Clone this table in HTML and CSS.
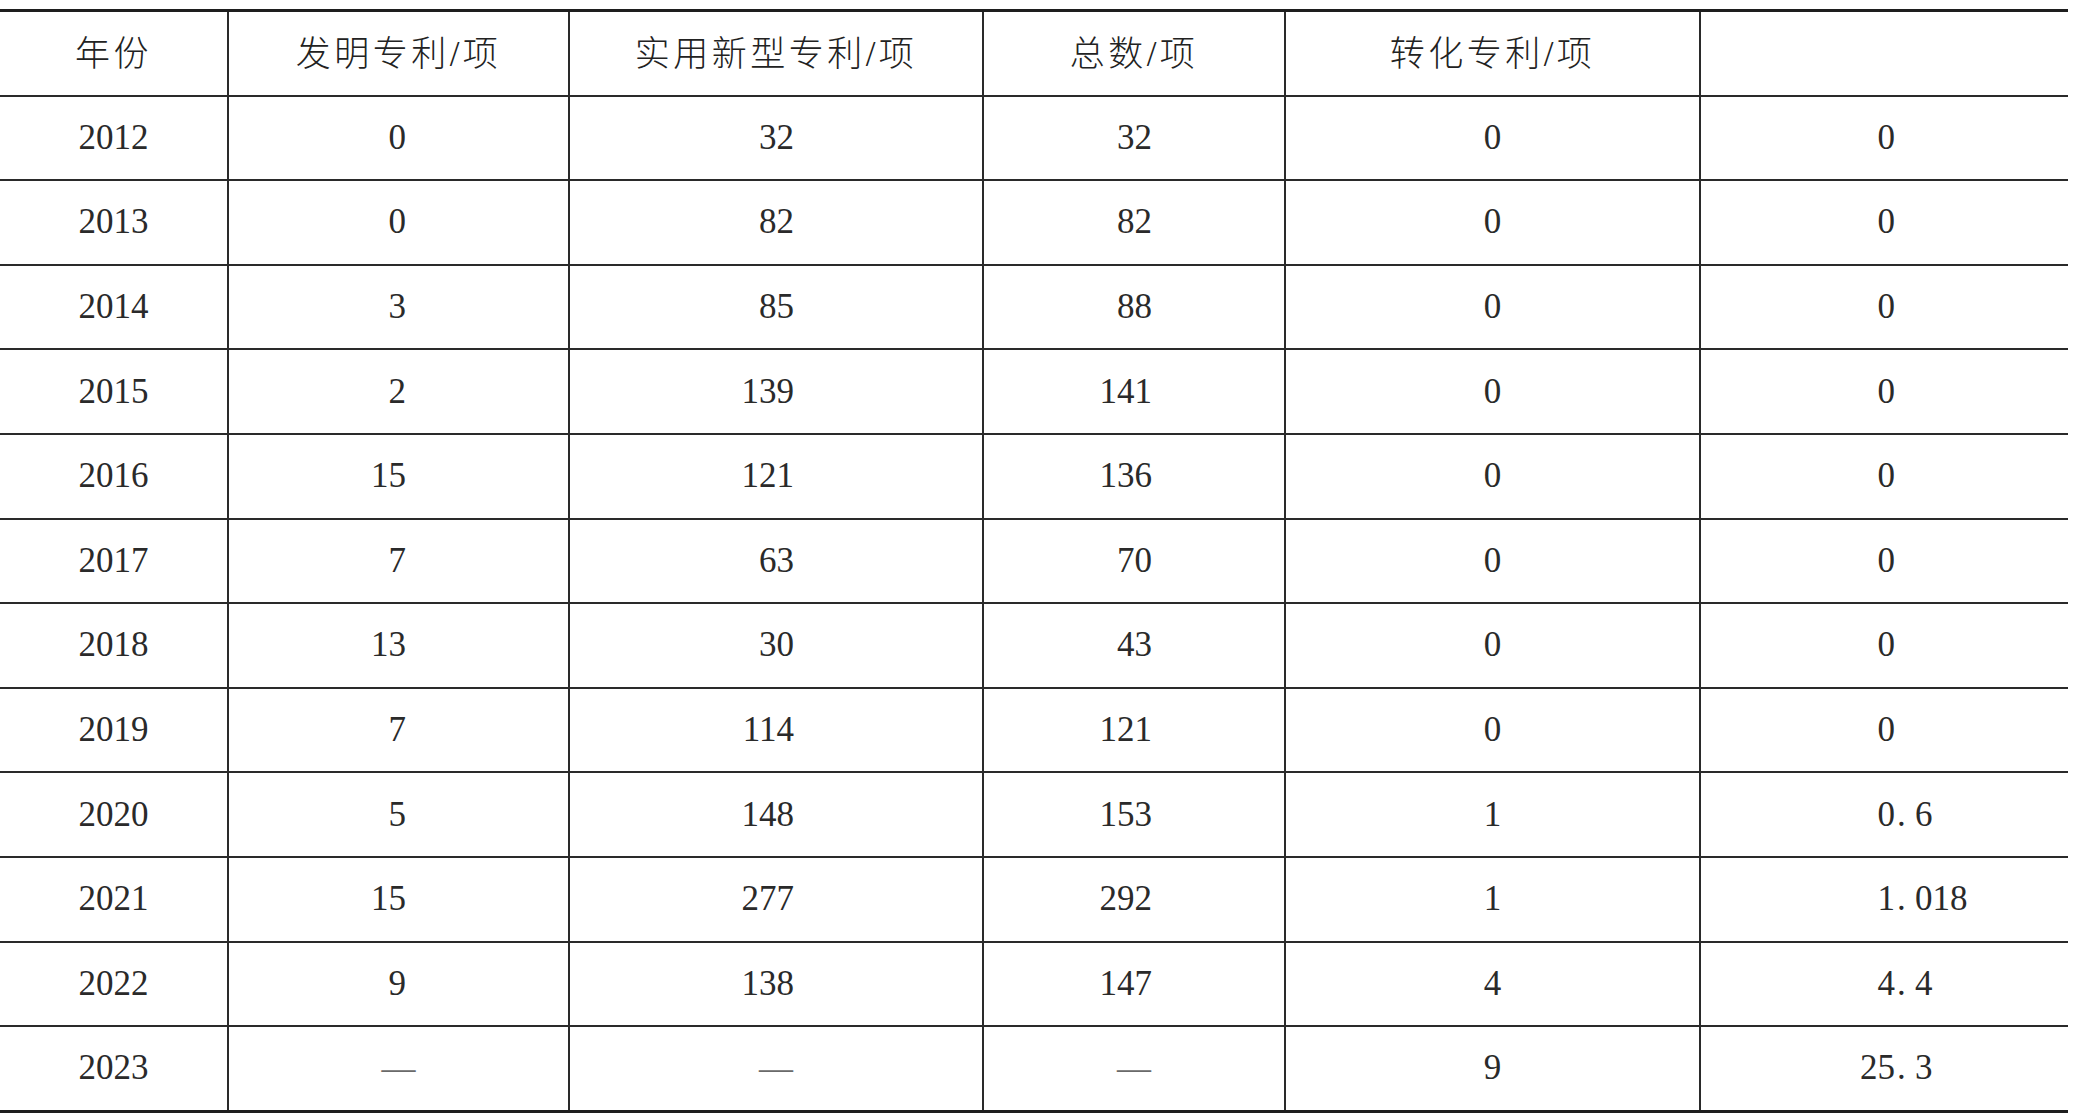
FILE: index.html
```html
<!DOCTYPE html>
<html lang="zh-CN">
<head>
<meta charset="utf-8">
<title>专利统计</title>
<link rel="stylesheet" href="styles.css">
</head>
<body>
<div class="table">
  <div class="row head">
    <div class="cell c1">年份</div>
    <div class="cell c2">发明专利/项</div>
    <div class="cell c3">实用新型专利/项</div>
    <div class="cell c4">总数/项</div>
    <div class="cell c5">转化专利/项</div>
    <div class="cell c6 blank"></div>
  </div>
  <div class="row"><div class="cell c1">2012</div><div class="cell c2 num">0</div><div class="cell c3 num">32</div><div class="cell c4 num">32</div><div class="cell c5">0</div><div class="cell c6"><span class="int">0</span></div></div>
  <div class="row"><div class="cell c1">2013</div><div class="cell c2 num">0</div><div class="cell c3 num">82</div><div class="cell c4 num">82</div><div class="cell c5">0</div><div class="cell c6"><span class="int">0</span></div></div>
  <div class="row"><div class="cell c1">2014</div><div class="cell c2 num">3</div><div class="cell c3 num">85</div><div class="cell c4 num">88</div><div class="cell c5">0</div><div class="cell c6"><span class="int">0</span></div></div>
  <div class="row"><div class="cell c1">2015</div><div class="cell c2 num">2</div><div class="cell c3 num">139</div><div class="cell c4 num">141</div><div class="cell c5">0</div><div class="cell c6"><span class="int">0</span></div></div>
  <div class="row"><div class="cell c1">2016</div><div class="cell c2 num">15</div><div class="cell c3 num">121</div><div class="cell c4 num">136</div><div class="cell c5">0</div><div class="cell c6"><span class="int">0</span></div></div>
  <div class="row"><div class="cell c1">2017</div><div class="cell c2 num">7</div><div class="cell c3 num">63</div><div class="cell c4 num">70</div><div class="cell c5">0</div><div class="cell c6"><span class="int">0</span></div></div>
  <div class="row"><div class="cell c1">2018</div><div class="cell c2 num">13</div><div class="cell c3 num">30</div><div class="cell c4 num">43</div><div class="cell c5">0</div><div class="cell c6"><span class="int">0</span></div></div>
  <div class="row"><div class="cell c1">2019</div><div class="cell c2 num">7</div><div class="cell c3 num">114</div><div class="cell c4 num">121</div><div class="cell c5">0</div><div class="cell c6"><span class="int">0</span></div></div>
  <div class="row"><div class="cell c1">2020</div><div class="cell c2 num">5</div><div class="cell c3 num">148</div><div class="cell c4 num">153</div><div class="cell c5">1</div><div class="cell c6"><span class="int">0</span><span class="pt">.</span><span class="frac">6</span></div></div>
  <div class="row"><div class="cell c1">2021</div><div class="cell c2 num">15</div><div class="cell c3 num">277</div><div class="cell c4 num">292</div><div class="cell c5">1</div><div class="cell c6"><span class="int">1</span><span class="pt">.</span><span class="frac">018</span></div></div>
  <div class="row"><div class="cell c1">2022</div><div class="cell c2 num">9</div><div class="cell c3 num">138</div><div class="cell c4 num">147</div><div class="cell c5">4</div><div class="cell c6"><span class="int">4</span><span class="pt">.</span><span class="frac">4</span></div></div>
  <div class="row"><div class="cell c1">2023</div><div class="cell c2 na">—</div><div class="cell c3 na">—</div><div class="cell c4 na">—</div><div class="cell c5">9</div><div class="cell c6"><span class="int">25</span><span class="pt">.</span><span class="frac">3</span></div></div>
</div>
</body>
</html>
```
FILE: styles.css
```css
html, body {
  margin: 0;
  padding: 0;
  background: #ffffff;
}

body {
  font-family: "Liberation Serif", "Noto Sans CJK SC", serif;
  color: #2a2a2a;
}

.table {
  width: 2068px;
  margin-top: 9px;
  border-top: 3px solid #1e1e1e;
  border-bottom: 3.5px solid #1e1e1e;
}

.row {
  display: grid;
  grid-template-columns: 227px 341px 414px 302px 415px 369px;
  height: 84.6px;
  box-sizing: border-box;
  border-top: 2px solid #2a2a2a;
}

.row:first-child {
  border-top: 0;
  height: 82.6px;
}

.cell {
  display: flex;
  align-items: center;
  justify-content: center;
  box-sizing: border-box;
  border-left: 2px solid #2a2a2a;
  font-size: 35px;
  white-space: nowrap;
}

.cell.c1 {
  border-left: 0;
}

.head .cell {
  font-family: "Liberation Serif", "Noto Sans CJK SC", serif;
  font-size: 35px;
  font-weight: 300;
  letter-spacing: 3.5px;
  color: #222222;
  padding-bottom: 5px;
}

.cell.num {
  justify-content: flex-end;
}

.cell.c2.num {
  padding-right: 162px;
}

.cell.c3.num {
  padding-right: 188px;
}

.cell.c4.num {
  padding-right: 132px;
}

.cell.na {
  color: #6a6a6a;
  font-size: 34px;
}

.cell.c6 {
  justify-content: flex-start;
  padding-left: 159px;
}

.int {
  display: inline-block;
  width: 35px;
  text-align: right;
}

.pt {
  display: inline-block;
  width: 20px;
  text-align: left;
  padding-left: 2px;
  box-sizing: border-box;
}

.frac {
  display: inline-block;
}
```
